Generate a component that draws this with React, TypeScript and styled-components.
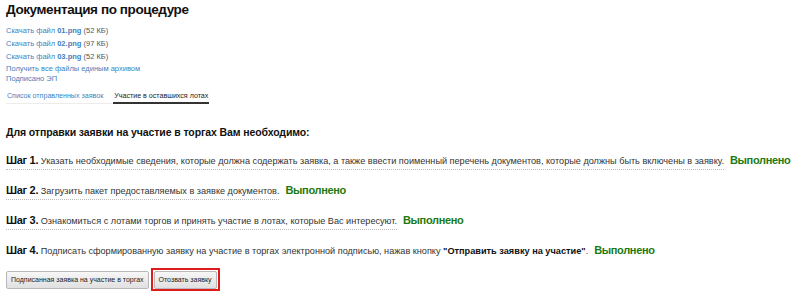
import styled, { createGlobalStyle } from "styled-components";

const GlobalStyle = createGlobalStyle`
  body {
    margin: 0;
    background: #fff;
    font-family: Arial, "Liberation Sans", sans-serif;
    color: #222;
  }
`;

const Page = styled.div`
  padding: 2px 6px 0;
  width: 800px;
  height: 292px;
  box-sizing: border-box;
  overflow: hidden;
`;

const Title = styled.h1`
  margin: 0 0 6px;
  font-size: 13.5px;
  letter-spacing: -0.4px;
  font-weight: bold;
  color: #111;
  line-height: 16px;
`;

const FileList = styled.div`
  display: flex;
  flex-direction: column;
  font-size: 7.5px;
`;

const FileRow = styled.div<{ $h: number }>`
  line-height: ${(p) => p.$h}px;
  color: #555;
`;

const DocLink = styled.a`
  color: #3f7fc0;
  text-decoration: none;
`;

const Tabs = styled.div`
  display: inline-flex;
  gap: 9px;
  margin-top: 4px;
  border-bottom: 1px solid #ececec;
  font-size: 7.1px;
`;

const Tab = styled.div<{ $active?: boolean }>`
  padding: 2px 1px 1px;
  line-height: 9px;
  color: ${(p) => (p.$active ? "#222" : "#3f7fc0")};
  border-bottom: 2px solid ${(p) => (p.$active ? "#333" : "transparent")};
  margin-bottom: -1px;
`;

const Lead = styled.h2`
  margin: 21px 0 14px;
  font-size: 10.5px;
  letter-spacing: -0.1px;
  font-weight: bold;
  color: #111;
  line-height: 14px;
`;

const Steps = styled.div`
  display: flex;
  flex-direction: column;
  gap: 14px;
`;

const StepRow = styled.div`
  display: flex;
  align-items: baseline;
  height: 16px;
  line-height: 15px;
  white-space: nowrap;
`;

const StepText = styled.span<{ $dotted?: boolean }>`
  flex-shrink: 0;
  font-size: 9.15px;
  line-height: 15px;
  color: #333;
  border-bottom: 1px dotted ${(p) => (p.$dotted ? "#bbb" : "transparent")};
  b {
    font-size: 11px;
    letter-spacing: -0.3px;
    color: #111;
  }
  strong {
    font-size: 9.2px;
    color: #111;
  }
`;

const Done = styled.span`
  flex-shrink: 0;
  margin-left: 6px;
  font-size: 11px;
  line-height: 15px;
  letter-spacing: -0.35px;
  font-weight: bold;
  color: #1c7a12;
`;

const Actions = styled.div`
  display: flex;
  align-items: center;
  gap: 2px;
  margin-top: 9px;
`;

const Outline = styled.div`
  border: 2px solid #e01b1b;
  padding: 0 1px;
  display: flex;
  height: 23px;
  box-sizing: border-box;
  align-items: center;
`;

const Button = styled.button`
  font-family: Arial, "Liberation Sans", sans-serif;
  font-size: 7px;
  color: #222;
  height: 18px;
  padding: 0 4px;
  border: 1px solid #b9b9b9;
  border-radius: 2px;
  background: linear-gradient(#f7f7f7, #e0e0e0);
`;

const files = [
  { name: "01.png", size: "52 КБ" },
  { name: "02.png", size: "97 КБ" },
  { name: "03.png", size: "52 КБ" },
];

const steps = [
  {
    n: 1,
    text: "Указать необходимые сведения, которые должна содержать заявка, а также ввести поименный перечень документов, которые должны быть включены в заявку.",
  },
  { n: 2, text: "Загрузить пакет предоставляемых в заявке документов." },
  { n: 3, text: "Ознакомиться с лотами торгов и принять участие в лотах, которые Вас интересуют." },
];

export default function App() {
  return (
    <>
      <GlobalStyle />
      <Page>
        <Title>Документация по процедуре</Title>
        <FileList>
          {files.map((f) => (
            <FileRow key={f.name} $h={13}>
              <DocLink href="#">
                Скачать файл <b>{f.name}</b>
              </DocLink>{" "}
              ({f.size})
            </FileRow>
          ))}
          <FileRow $h={11}>
            <DocLink href="#">Получить все файлы единым архивом</DocLink>
          </FileRow>
          <FileRow $h={10}>
            <DocLink href="#">Подписано ЭП</DocLink>
          </FileRow>
        </FileList>
        <Tabs>
          <Tab>Список отправленных заявок</Tab>
          <Tab $active>Участие в оставшихся лотах</Tab>
        </Tabs>
        <Lead>Для отправки заявки на участие в торгах Вам необходимо:</Lead>
        <Steps>
          {steps.map((s) => (
            <StepRow key={s.n}>
              <StepText $dotted>
                <b>Шаг {s.n}.</b> {s.text}
              </StepText>
              <Done>Выполнено</Done>
            </StepRow>
          ))}
          <StepRow>
            <StepText>
              <b>Шаг 4.</b> Подписать сформированную заявку на участие в торгах электронной подписью, нажав кнопку{" "}
              <strong>"Отправить заявку на участие"</strong>.
            </StepText>
            <Done>Выполнено</Done>
          </StepRow>
        </Steps>
        <Actions>
          <Button>Подписанная заявка на участие в торгах</Button>
          <Outline>
            <Button>Отозвать заявку</Button>
          </Outline>
        </Actions>
      </Page>
    </>
  );
}
